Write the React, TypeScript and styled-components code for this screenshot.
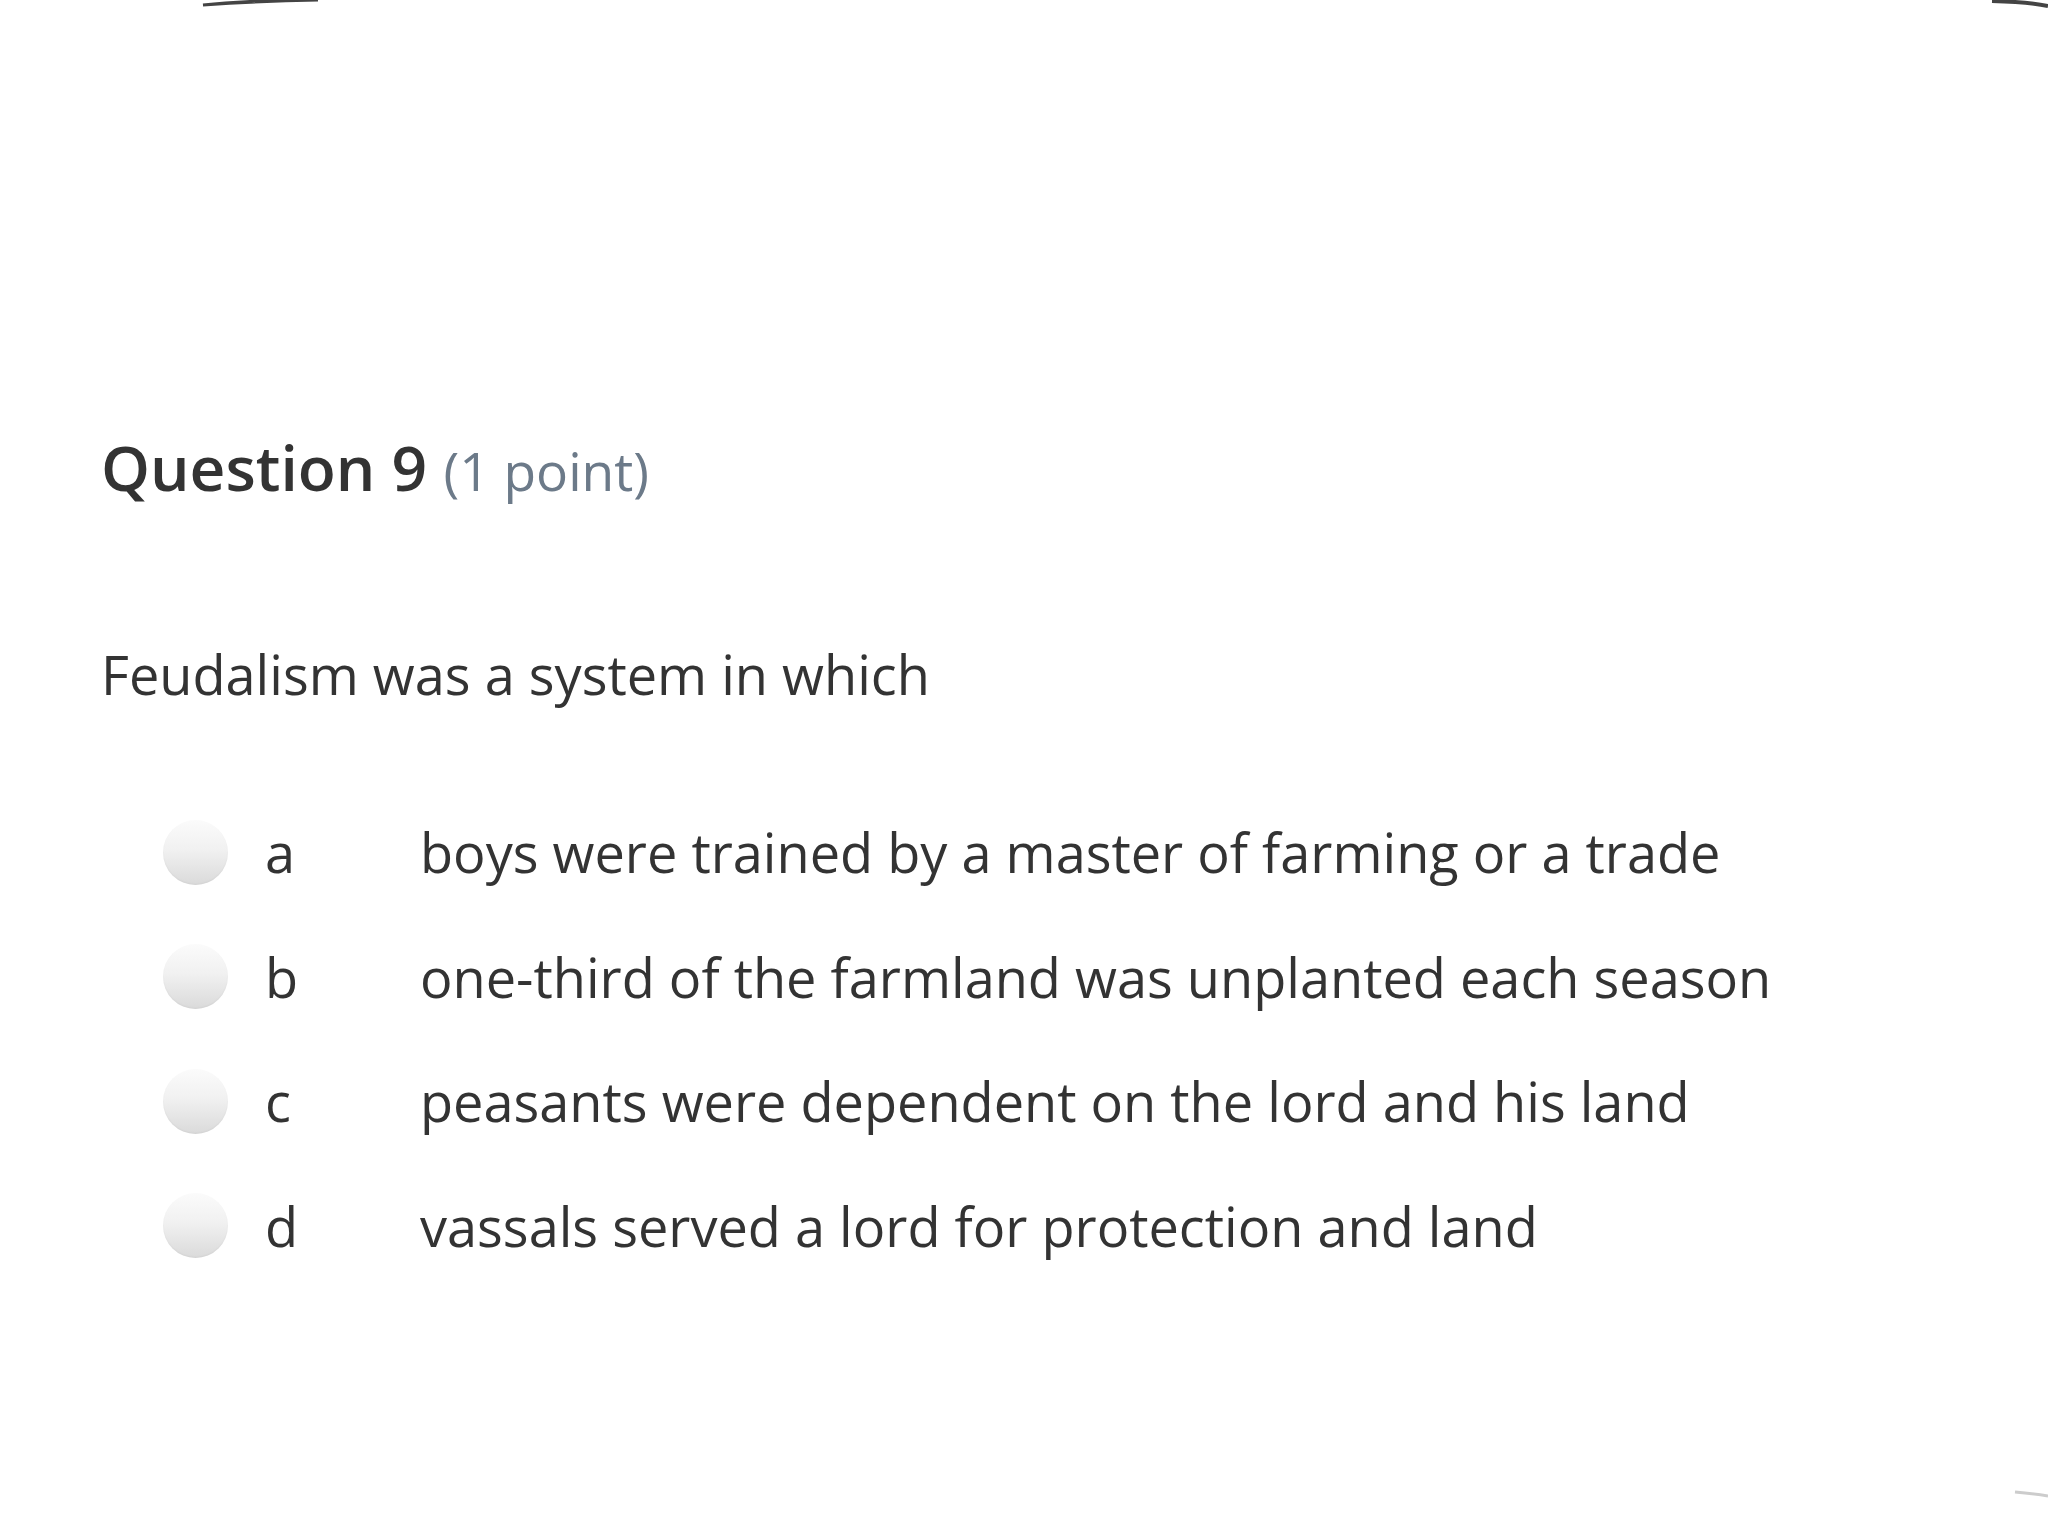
import React, { FC } from 'react';
import styled, { createGlobalStyle } from 'styled-components';

const GlobalStyle = createGlobalStyle`
    html, body {
        margin: 0;
        padding: 0;
        background: #ffffff;
    }
    body {
        font-family: "Open Sans", "Noto Sans", sans-serif;
        color: #333333;
    }
`;

const Page = styled.div`
    position: relative;
    width: 2048px;
    height: 1536px;
    box-sizing: border-box;
    padding: 423px 0 0 101px;
    overflow: hidden;
    background: #ffffff;
`;

const Edges = styled.svg`
    position: absolute;
    left: 0;
    top: 0;
    width: 2048px;
    height: 1536px;
    pointer-events: none;
`;

const Heading = styled.h2`
    margin: 0;
    font-size: 62.3px;
    line-height: 88px;
    font-weight: 600;
    color: #333333;
`;

const Points = styled.span`
    font-size: 53.3px;
    font-weight: 400;
    color: #6c7a89;
`;

const Prompt = styled.p`
    margin: 123px 0 0;
    font-size: 54.1px;
    line-height: 72px;
    font-weight: 400;
    color: #333333;
`;

const Options = styled.ul`
    list-style: none;
    margin: 80px 0 0;
    padding: 0 0 0 62px;
`;

const Option = styled.li`
    display: grid;
    grid-template-columns: 65px 192px auto;
    align-items: center;
    padding: 26px 0 26.5px;
    font-size: 54.1px;
    line-height: 72px;
    color: #333333;
`;

const Radio = styled.span`
    display: block;
    width: 65px;
    height: 65px;
    border-radius: 50%;
    background: linear-gradient(180deg, #fbfbfb 0%, #f1f1f1 45%, #dadada 100%);
    box-shadow: inset 0 -1px 2px rgba(0, 0, 0, 0.04);
`;

const Letter = styled.span`
    padding-left: 37px;
`;

const Answer = styled.span`
    white-space: nowrap;
`;

interface choice {
    letter: string,
    text: string
}

const choices: choice[] = [
    { letter: 'a', text: 'boys were trained by a master of farming or a trade' },
    { letter: 'b', text: 'one-third of the farmland was unplanted each season' },
    { letter: 'c', text: 'peasants were dependent on the lord and his land' },
    { letter: 'd', text: 'vassals served a lord for protection and land' },
];

const App: FC = () => {
    return (
        <Page>
            <GlobalStyle />
            <Heading>Question 9 <Points>(1 point)</Points></Heading>
            <Prompt>Feudalism was a system in which</Prompt>
            <Options>
                {choices.map((c) => (
                    <Option key={c.letter}>
                        <Radio />
                        <Letter>{c.letter}</Letter>
                        <Answer>{c.text}</Answer>
                    </Option>
                ))}
            </Options>
            <Edges viewBox="0 0 2048 1536">
                <path d="M203 5 Q250 0 318 0 L318 0 Q260 1 203 5 Z" fill="#555" stroke="#444" strokeWidth="3" />
                <path d="M1992 1 Q2030 2 2048 6" fill="none" stroke="#444" strokeWidth="4" />
                <path d="M2015 1492 Q2035 1494 2048 1496" fill="none" stroke="#ccc" strokeWidth="3" />
            </Edges>
        </Page>
    );
};

export default App;
